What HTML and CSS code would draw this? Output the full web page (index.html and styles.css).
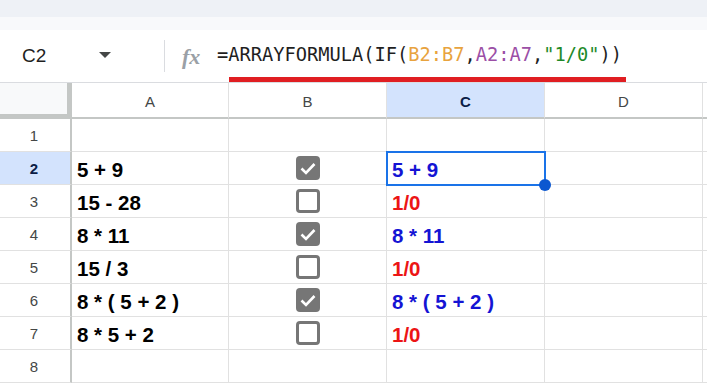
FILE: index.html
```html
<!DOCTYPE html>
<html lang="en">
<head>
    <meta charset="UTF-8">
    <meta name="viewport" content="width=device-width, initial-scale=1.0">
    <title>ARRAYFORMULA IF</title>
    <link rel="stylesheet" href="styles.css">
</head>
<body>
    <div class="toolbar-edge"></div>
    <div class="toolbar-fade"></div>

    <div class="formula-bar">
        <div class="name-box">
            <span class="cell-ref">C2</span>
            <span class="caret"></span>
        </div>
        <div class="bar-sep"></div>
        <span class="fx">fx</span>
        <div class="formula-wrap">
            <div class="formula">=ARRAYFORMULA(IF(<span class="ref-b">B2:B7</span>,<span class="ref-a">A2:A7</span>,<span class="str">"1/0"</span>))</div>
            <div class="mark"></div>
        </div>
    </div>

    <div class="sheet">
        <div class="corner"></div>
        <div class="col-head">A</div>
        <div class="col-head">B</div>
        <div class="col-head active">C</div>
        <div class="col-head">D</div>
        <div class="col-head"></div>

        <div class="row-head">1</div>
        <div class="cell"></div><div class="cell"></div><div class="cell"></div><div class="cell"></div><div class="cell"></div>

        <div class="row-head active">2</div>
        <div class="cell">5 + 9</div>
        <div class="cell center"><span class="box checked"><svg viewBox="0 0 24 24"><path d="M5.5 12.5l4.5 4.5 8.5-9"/></svg></span></div>
        <div class="cell blue selected">5 + 9</div>
        <div class="cell"></div><div class="cell"></div>

        <div class="row-head">3</div>
        <div class="cell">15 - 28</div>
        <div class="cell center"><span class="box"></span></div>
        <div class="cell red">1/0</div>
        <div class="cell"></div><div class="cell"></div>

        <div class="row-head">4</div>
        <div class="cell">8 * 11</div>
        <div class="cell center"><span class="box checked"><svg viewBox="0 0 24 24"><path d="M5.5 12.5l4.5 4.5 8.5-9"/></svg></span></div>
        <div class="cell blue">8 * 11</div>
        <div class="cell"></div><div class="cell"></div>

        <div class="row-head">5</div>
        <div class="cell">15 / 3</div>
        <div class="cell center"><span class="box"></span></div>
        <div class="cell red">1/0</div>
        <div class="cell"></div><div class="cell"></div>

        <div class="row-head">6</div>
        <div class="cell">8 * ( 5 + 2 )</div>
        <div class="cell center"><span class="box checked"><svg viewBox="0 0 24 24"><path d="M5.5 12.5l4.5 4.5 8.5-9"/></svg></span></div>
        <div class="cell blue">8 * ( 5 + 2 )</div>
        <div class="cell"></div><div class="cell"></div>

        <div class="row-head">7</div>
        <div class="cell">8 * 5 + 2</div>
        <div class="cell center"><span class="box"></span></div>
        <div class="cell red">1/0</div>
        <div class="cell"></div><div class="cell"></div>

        <div class="row-head">8</div>
        <div class="cell"></div><div class="cell"></div><div class="cell"></div><div class="cell"></div><div class="cell"></div>
    </div>
</body>
</html>
```

FILE: styles.css
```css
/* Sheet + formula bar */
body {
    margin: 0;
    background: #fff;
    font-family: "Liberation Sans", Arial, sans-serif;
    color: #000;
    overflow: hidden;
}

.toolbar-edge {
    height: 17px;
    background: #eef1f6;
}

.toolbar-fade {
    height: 13px;
    background: #f8f9fb;
}

.formula-bar {
    height: 52px;
    display: flex;
    align-items: center;
}

.name-box {
    width: 164px;
    display: flex;
    align-items: center;
    box-sizing: border-box;
    padding-left: 22px;
}

.cell-ref {
    font-size: 19px;
    color: #1f1f1f;
    width: 77px;
}

.caret {
    width: 0;
    height: 0;
    border-left: 6px solid transparent;
    border-right: 6px solid transparent;
    border-top: 6px solid #444746;
    margin-top: -3px;
}

.bar-sep {
    width: 1px;
    height: 32px;
    background: #dadce0;
}

.fx {
    font-family: "Liberation Serif", serif;
    font-style: italic;
    font-weight: bold;
    font-size: 22px;
    color: #9aa0a6;
    margin-left: 17px;
    width: 35px;
    margin-top: 2px;
}

.formula-wrap {
    display: flex;
    flex-direction: column;
    padding-top: 13px;
}

.formula {
    font-family: "DejaVu Sans Mono", monospace;
    font-size: 18.7px;
    color: #1f1f1f;
    line-height: 22px;
}

.ref-b { color: #e8a33e; }
.ref-a { color: #9b4fa6; }
.str { color: #1e8a28; }

.mark {
    margin-left: 12px;
    width: 397px;
    height: 5px;
    margin-top: 11px;
    background: #e01e22;
}

.sheet {
    display: grid;
    grid-template-columns: 72px 157px 158px 158px 158px 1fr;
    grid-template-rows: 36px repeat(8, 33px);
    border-top: 1px solid #dadce0;
}

.corner {
    background: #f8f9fa;
    border-right: 5px solid #c4c7c5;
    border-bottom: 5px solid #c4c7c5;
    box-sizing: border-box;
}

.col-head {
    display: flex;
    align-items: center;
    justify-content: center;
    font-size: 15px;
    color: #444746;
    border-right: 1px solid #e1e1e1;
    border-bottom: 2px solid #c4c7c5;
    box-sizing: border-box;
    padding-top: 2px;
}

.col-head.active,
.row-head.active {
    background: #d3e3fd;
    color: #0b1d45;
    font-weight: bold;
}

.row-head {
    display: flex;
    align-items: center;
    justify-content: center;
    font-size: 15px;
    color: #444746;
    border-right: 2px solid #c4c7c5;
    border-bottom: 1px solid #e1e1e1;
    box-sizing: border-box;
    padding-right: 2px;
}

.cell {
    display: flex;
    align-items: center;
    padding: 4px 0 0 5px;
    font-size: 20.5px;
    font-weight: bold;
    border-right: 1px solid #e1e1e1;
    border-bottom: 1px solid #e1e1e1;
    box-sizing: border-box;
    white-space: nowrap;
}

.cell.center {
    justify-content: center;
    padding: 0 0 0 1px;
}

.blue { color: #1414d4; }
.red { color: #ec1515; }

.selected {
    position: relative;
    outline: 2px solid #1a73e8;
    outline-offset: -1px;
    z-index: 1;
}

.selected::after {
    content: "";
    position: absolute;
    right: -7px;
    bottom: -7px;
    width: 12px;
    height: 12px;
    border-radius: 50%;
    background: #0b57d0;
}

.box {
    width: 24px;
    height: 24px;
    border: 3px solid #767676;
    border-radius: 4px;
    box-sizing: border-box;
    background: #fff;
}

.box.checked {
    background: #767676;
    border: none;
}

.box svg {
    width: 24px;
    height: 24px;
    display: block;
    fill: none;
    stroke: #fff;
    stroke-width: 2.6;
}
```
